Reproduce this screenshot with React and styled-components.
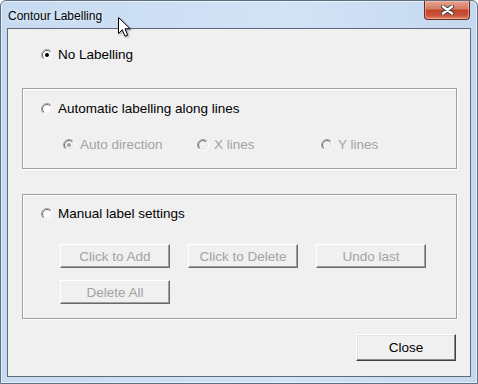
import React from 'react';
import styled, { createGlobalStyle } from 'styled-components';

const GlobalStyle = createGlobalStyle`
  html, body {
    margin: 0;
    padding: 0;
    background: #ffffff;
  }
  * {
    box-sizing: border-box;
  }
`;

const Radio = ({ checked, disabled }) => {
  const id = disabled ? 'rd' : 'rn';
  return (
    <RadioBox>
      <svg width="12" height="12" viewBox="0 0 12 12">
        <defs>
          <linearGradient id={`${id}o`} x1="0" y1="0" x2="1" y2="1">
            <stop offset="0.45" stopColor="#a0a0a0" />
            <stop offset="0.55" stopColor="#ffffff" />
          </linearGradient>
          <linearGradient id={`${id}i`} x1="0" y1="0" x2="1" y2="1">
            <stop offset="0.45" stopColor="#696969" />
            <stop offset="0.55" stopColor="#e3e3e3" />
          </linearGradient>
        </defs>
        <circle cx="6" cy="6" r="5.5" fill="none" stroke={`url(#${id}o)`} strokeWidth="1" />
        <circle cx="6" cy="6" r="4.5" fill={disabled ? '#f0f0f0' : '#ffffff'} stroke={`url(#${id}i)`} strokeWidth="1" />
        {checked && <circle cx="6" cy="6" r="2" fill={disabled ? '#a0a0a0' : '#000000'} />}
      </svg>
    </RadioBox>
  );
};

const RadioOption = ({ label, checked, disabled }) => (
  <Option $disabled={disabled}>
    <Radio checked={checked} disabled={disabled} />
    <span>{label}</span>
  </Option>
);

const App = () => {
  return (
    <>
      <GlobalStyle />
      <Window>
        <TitleBar>
          <Title>Contour Labelling</Title>
          <CloseX>
            <svg width="13" height="10" viewBox="0 0 13 10">
              <path d="M2 1.5 L11 8.5 M11 1.5 L2 8.5" stroke="#3b3b3b" strokeWidth="4.2" strokeLinecap="round" />
              <path d="M2 1.5 L11 8.5 M11 1.5 L2 8.5" stroke="#ffffff" strokeWidth="2.4" strokeLinecap="round" />
            </svg>
          </CloseX>
        </TitleBar>

        <Client>
          <TopRow>
            <RadioOption label="No Labelling" checked />
          </TopRow>

          <GroupBox $height={81}>
            <RadioOption label="Automatic labelling along lines" />
            <SubRow>
              <RadioOption label="Auto direction" checked disabled />
              <RadioOption label="X lines" disabled />
              <RadioOption label="Y lines" disabled />
            </SubRow>
          </GroupBox>

          <GroupBox $height={125} $top={11}>
            <RadioOption label="Manual label settings" />
            <ButtonGrid>
              <PushButton disabled>Click to Add</PushButton>
              <PushButton disabled>Click to Delete</PushButton>
              <PushButton disabled>Undo last</PushButton>
              <PushButton disabled>Delete All</PushButton>
            </ButtonGrid>
          </GroupBox>

          <Footer>
            <CloseButton>Close</CloseButton>
          </Footer>
        </Client>

        <Cursor>
          <svg width="13" height="21" viewBox="0 0 13 21">
            <path
              d="M0.5 0.5 L0.5 16.5 L4.3 12.8 L7 19.2 L9.6 18.1 L7 11.8 L12.2 11.8 Z"
              fill="#ffffff"
              stroke="#000000"
              strokeWidth="1"
              strokeLinejoin="miter"
            />
          </svg>
        </Cursor>
      </Window>
    </>
  );
};

const Window = styled.div`
  position: relative;
  width: 478px;
  height: 384px;
  display: flex;
  flex-direction: column;
  padding: 0 6px 6px;
  border: 1px solid #5f6f82;
  border-radius: 6px 6px 0 0;
  background: linear-gradient(to right, #c6daf1 0%, #d3e3f6 60%, #c4d8ef 100%);
  box-shadow: inset 0 0 0 1px rgba(255, 255, 255, 0.55);
  font-family: "Liberation Sans", Arial, sans-serif;
`;

const TitleBar = styled.div`
  height: 27px;
  display: flex;
  align-items: flex-start;
  justify-content: space-between;
`;

const Title = styled.div`
  margin-top: 8px;
  padding-left: 1px;
  font-size: 12px;
  line-height: 14px;
  color: #000000;
  text-shadow: 0 0 6px rgba(255, 255, 255, 0.9);
`;

const CloseX = styled.div`
  width: 46px;
  height: 19px;
  margin-right: 1px;
  display: flex;
  align-items: center;
  justify-content: center;
  border: 1px solid #6c2a20;
  border-top: none;
  border-radius: 0 0 4px 4px;
  background: linear-gradient(to bottom, #e8a493 0%, #d47a63 45%, #c24328 50%, #c9543a 80%, #e08a6c 100%);
  box-shadow: inset 0 0 0 1px rgba(255, 210, 200, 0.45);
`;

const Client = styled.div`
  flex: 1;
  display: flex;
  flex-direction: column;
  padding: 0 13px 0 14px;
  background: #f0f0f0;
  border: 1px solid #5e6b7a;
  font-size: 13.5px;
  color: #000000;
`;

const TopRow = styled.div`
  margin-top: 18px;
  padding-left: 19px;
`;

const Option = styled.div`
  display: flex;
  align-items: center;
  gap: 5px;
  height: 16px;
  line-height: 16px;
  white-space: nowrap;
  color: ${(p) => (p.$disabled ? '#a3a3a3' : '#000000')};
`;

const RadioBox = styled.span`
  display: inline-flex;
  width: 12px;
  height: 12px;
  flex-shrink: 0;
`;

const GroupBox = styled.div`
  width: 435px;
  height: ${(p) => p.$height}px;
  margin-top: 25px;
  padding: ${(p) => p.$top || 12}px 0 0 18px;
  border: 1px solid #a0a0a0;
  box-shadow: 1px 1px 0 #ffffff, inset 1px 1px 0 #ffffff;
`;

const SubRow = styled.div`
  display: grid;
  grid-template-columns: 134px 124px auto;
  margin-top: 20px;
  padding-left: 22px;
`;

const ButtonGrid = styled.div`
  display: grid;
  grid-template-columns: repeat(3, 110px);
  column-gap: 18px;
  row-gap: 12px;
  margin-top: 22px;
  padding-left: 19px;
`;

const PushButton = styled.button`
  height: 24px;
  padding: 0;
  font-family: "Liberation Sans", Arial, sans-serif;
  font-size: 13.5px;
  color: #a3a3a3;
  background: #f0f0f0;
  border: 1px solid;
  border-color: #ffffff #696969 #696969 #ffffff;
  box-shadow: inset -1px -1px 0 #a0a0a0;
  cursor: default;
`;

const Footer = styled.div`
  width: 434px;
  display: flex;
  justify-content: flex-end;
  margin-top: 15px;
`;

const CloseButton = styled(PushButton)`
  width: 100px;
  height: 27px;
  color: #000000;
  border-color: #ffffff #404040 #404040 #ffffff;
  box-shadow: inset -1px -1px 0 #8a8a8a, inset 1px 1px 0 #e3e3e3;
`;

const Cursor = styled.div`
  position: absolute;
  left: 117px;
  top: 16px;
  width: 13px;
  height: 21px;
  pointer-events: none;
  filter: drop-shadow(1px 1px 1px rgba(0, 0, 0, 0.35));
`;

export default App;
